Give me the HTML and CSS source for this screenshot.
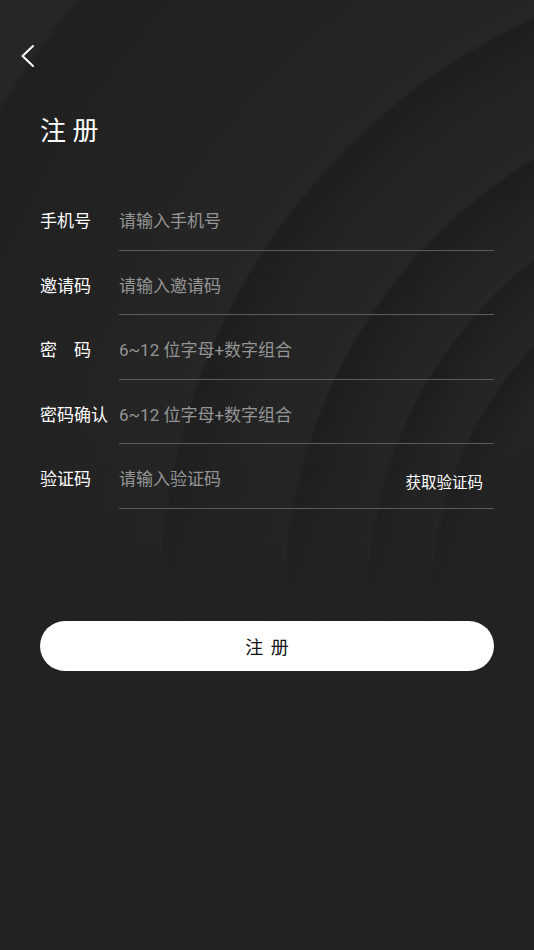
FILE: index.html
```html
<!DOCTYPE html>
<html lang="zh-CN">
<head>
<meta charset="utf-8">
<meta name="viewport" content="width=device-width, initial-scale=1">
<title>注册</title>
<link rel="stylesheet" href="styles.css">
</head>
<body>
<div class="page">
  <header class="topbar">
    <button class="back" type="button" aria-label="返回">
      <svg width="14" height="24" viewBox="0 0 14 24" fill="none" stroke="#ffffff" stroke-width="2" stroke-linecap="round" stroke-linejoin="round"><path d="M12 2 L1.5 12 L12 22"/></svg>
    </button>
  </header>
  <h1 class="title">注 册</h1>
  <form class="form">
    <div class="row">
      <span class="label">手机号</span>
      <div class="field"><input class="input" type="text" placeholder="请输入手机号"></div>
    </div>
    <div class="row">
      <span class="label">邀请码</span>
      <div class="field"><input class="input" type="text" placeholder="请输入邀请码"></div>
    </div>
    <div class="row">
      <span class="label">密　码</span>
      <div class="field"><input class="input" type="password" placeholder="6~12 位字母+数字组合"></div>
    </div>
    <div class="row">
      <span class="label">密码确认</span>
      <div class="field"><input class="input" type="password" placeholder="6~12 位字母+数字组合"></div>
    </div>
    <div class="row">
      <span class="label">验证码</span>
      <div class="field">
        <input class="input" type="text" placeholder="请输入验证码">
        <button class="code" type="button">获取验证码</button>
      </div>
    </div>
  </form>
  <button class="submit" type="button">注 册</button>
</div>
</body>
</html>
```
FILE: styles.css
```css
html, body {
  margin: 0;
  padding: 0;
}
body {
  width: 534px;
  min-height: 950px;
  font-family: Roboto, "Noto Sans CJK SC", sans-serif;
  color: #ffffff;
  background-color: #222222;
  background-image:
    linear-gradient(to bottom, rgba(34,34,34,0) 0, rgba(34,34,34,0) 380px, rgba(34,34,34,0.85) 600px, #222222 700px),
    radial-gradient(circle at 800px 600px,
      #232323 0, #242424 330px, #1d1d1d 366px, #262626 370px,
      #232323 400px, #1d1d1d 430px, #262626 434px,
      #232323 470px, #1d1d1d 513px, #262626 517px,
      #242424 580px, #1e1e1e 638px, #262626 642px,
      #232323 760px, #202020 936px, #262626 942px, #252525 1100px);
  background-repeat: no-repeat;
}
.page {
  display: flex;
  flex-direction: column;
  padding: 0 40px 0 40px;
}
.topbar {
  display: flex;
  padding-top: 44px;
  margin-left: -19px;
  height: 24px;
}
.back {
  background: none;
  border: 0;
  padding: 0;
  width: 14px;
  height: 24px;
  display: block;
  cursor: pointer;
}
.back svg {
  display: block;
}
.title {
  margin: 49px 0 0 0;
  font-size: 26px;
  line-height: 28px;
  font-weight: 400;
  word-spacing: 0;
  letter-spacing: 0;
}
.form {
  display: flex;
  flex-direction: column;
  margin-top: 41px;
}
.row {
  display: flex;
  height: 64.5px;
  box-sizing: border-box;
}
.label {
  width: 79px;
  flex: none;
  font-size: 17px;
  line-height: 22px;
  padding-top: 24px;
  white-space: nowrap;
  color: #ffffff;
}
.field {
  flex: 1;
  display: flex;
  align-items: flex-start;
  border-bottom: 1px solid #5c5c5c;
  box-sizing: border-box;
  padding-top: 24px;
}
.input {
  flex: 1;
  min-width: 0;
  background: transparent;
  border: 0;
  outline: none;
  padding: 0;
  margin: 0;
  font-family: Roboto, "Noto Sans CJK SC", sans-serif;
  font-size: 17px;
  line-height: 22px;
  height: 22px;
  color: #ffffff;
}
.input::placeholder {
  color: #959595;
}
.code {
  flex: none;
  background: none;
  border: 0;
  padding: 0;
  margin: 4px 11px 0 0;
  font-family: Roboto, "Noto Sans CJK SC", sans-serif;
  font-size: 15.5px;
  line-height: 22px;
  color: #ffffff;
}
.submit {
  margin-top: 112px;
  height: 50px;
  width: 100%;
  border: 0;
  border-radius: 25px;
  background: #ffffff;
  color: #111111;
  font-family: Roboto, "Noto Sans CJK SC", sans-serif;
  font-size: 18px;
  word-spacing: 3px;
  cursor: pointer;
}
```
